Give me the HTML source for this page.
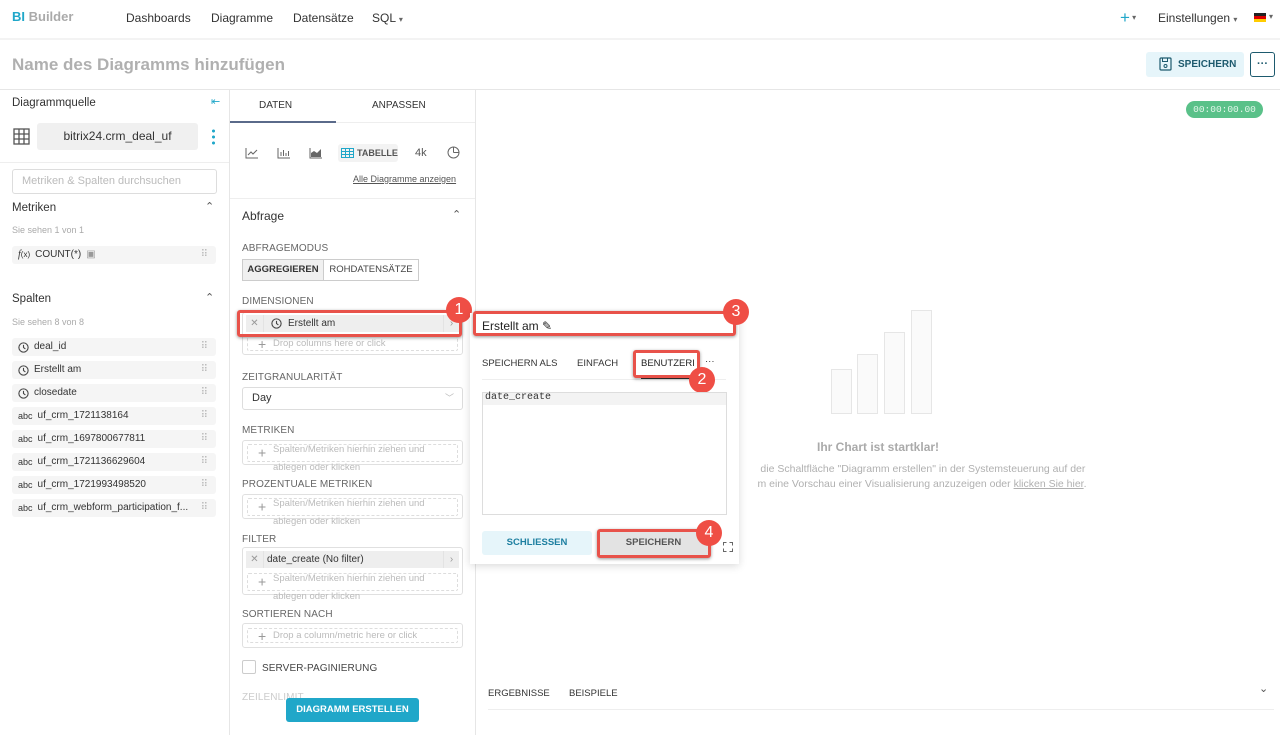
<!DOCTYPE html>
<html><head><meta charset="utf-8"><style>
*{box-sizing:border-box;margin:0;padding:0}
body{width:1280px;height:735px;overflow:hidden;background:#fff;font-family:"Liberation Sans",sans-serif;color:#333;position:relative}
.a{position:absolute}
.lab{font-size:10px;color:#666;letter-spacing:.1px}
.item{position:absolute;left:12px;width:204px;height:18px;background:#f5f5f5;border-radius:3px;font-size:10px;color:#333;line-height:18px;padding-left:6px;display:flex;align-items:center;gap:5px}
.item .dots{position:absolute;right:8px;top:0;color:#bbb;font-size:10px}
.drop{position:absolute;left:242px;width:221px;border:1px solid #e0e0e0;border-radius:3px}
.drop .in{position:absolute;left:4px;right:4px;border:1px dashed #ddd;border-radius:2px;font-size:9.5px;color:#bbb;line-height:14px;padding-left:25px}
.drop .in:before{content:"+";position:absolute;left:10px;top:50%;transform:translateY(-50%);font-size:14px;color:#999}
.red{position:absolute;border:3px solid #e8524a;border-radius:3px;box-shadow:0 1px 3px rgba(0,0,0,.4)}
.num{position:absolute;width:26px;height:26px;border-radius:50%;background:#ef4e45;color:#fff;font-size:16px;text-align:center;line-height:26px}
.chip{position:absolute;left:246px;width:213px;height:17px;background:#eee;font-size:10px;color:#333;display:flex;align-items:center}
.chip .x{width:18px;text-align:center;color:#999;border-right:1px solid #e3e3e3;height:17px;line-height:17px}
.chip .r{position:absolute;right:0;width:16px;text-align:center;color:#999;border-left:1px solid #e3e3e3;height:17px;line-height:17px}
</style></head><body>
<svg width="0" height="0" style="position:absolute"><defs><symbol id="clk" viewBox="0 0 10 10"><circle cx="5" cy="5" r="4.2" fill="none" stroke="#444" stroke-width="1"/><path d="M5 2.6V5l1.7 1.3" fill="none" stroke="#444" stroke-width="1"/></symbol></defs></svg>
<!-- nav -->
<div class="a" style="left:12px;top:9px;font-size:13px;font-weight:bold;color:#aaa"><span style="color:#20a7c9">BI</span> Builder</div>
<div class="a" style="left:126px;top:11px;font-size:12px;color:#333">Dashboards</div>
<div class="a" style="left:211px;top:11px;font-size:12px;color:#333">Diagramme</div>
<div class="a" style="left:293px;top:11px;font-size:12px;color:#333">Datensätze</div>
<div class="a" style="left:372px;top:11px;font-size:12px;color:#333">SQL <span style="font-size:8px;color:#666">▾</span></div>
<div class="a" style="left:1120px;top:8px;font-size:17px;color:#20a7c9">+<span style="font-size:8px;color:#666;vertical-align:3px"> ▾</span></div>
<div class="a" style="left:1158px;top:11px;font-size:12px;color:#333">Einstellungen <span style="font-size:8px;color:#666">▾</span></div>
<div class="a" style="left:1254px;top:13px;width:12px;height:9px;background:linear-gradient(#222 33%,#d00 33%,#d00 66%,#fc0 66%)"></div>
<div class="a" style="left:1269px;top:12px;font-size:8px;color:#666">▾</div>
<div class="a" style="left:0;top:38px;width:1280px;height:2px;background:#f3f3f3"></div>
<!-- title -->
<div class="a" style="left:12px;top:55px;font-size:17px;font-weight:bold;color:#b0b0b0">Name des Diagramms hinzufügen</div>
<div class="a" style="left:1146px;top:52px;width:98px;height:25px;background:#e6f5fa;border-radius:3px;font-size:10px;font-weight:bold;color:#1d5a6e;line-height:25px;padding-left:32px">SPEICHERN</div>
<svg class="a" style="left:1159px;top:57px" width="13" height="14" viewBox="0 0 13 14"><rect x="1" y="1" width="11" height="12" rx="1" fill="none" stroke="#1d5a6e" stroke-width="1.2"/><rect x="3.5" y="1" width="5" height="3.5" fill="none" stroke="#1d5a6e"/><circle cx="6.5" cy="9" r="1.5" fill="none" stroke="#1d5a6e"/></svg>
<div class="a" style="left:1250px;top:52px;width:25px;height:25px;border:1px solid #1d5a6e;border-radius:3px;text-align:center;font-size:11px;font-weight:bold;color:#1d5a6e;line-height:22px">···</div>
<div class="a" style="left:0;top:89px;width:1280px;height:1px;background:#e6e6e6"></div>
<div class="a" style="left:229px;top:89px;width:1px;height:646px;background:#e6e6e6"></div>
<div class="a" style="left:475px;top:89px;width:1px;height:646px;background:#e6e6e6"></div>
<!-- left -->
<div class="a" style="left:12px;top:97px;font-size:11.5px;color:#333">Diagrammquelle</div>
<div class="a" style="left:211px;top:95px;font-size:11px;color:#20a7c9">⇤</div>
<svg class="a" style="left:13px;top:128px" width="17" height="17" viewBox="0 0 17 17"><g fill="none" stroke="#555" stroke-width="1.3"><rect x="1" y="1" width="15" height="15"/><path d="M6 1v15M11 1v15M1 6h15M1 11h15"/></g></svg>
<div class="a" style="left:37px;top:123px;width:161px;height:27px;background:#f0f0f0;border-radius:3px;font-size:12px;color:#333;text-align:center;line-height:27px">bitrix24.crm_deal_uf</div>
<div class="a" style="left:212px;top:128px;width:3px;height:17px;background:radial-gradient(circle,#20a7c9 1.4px,transparent 1.6px) 0 0/3px 6px"></div>
<div class="a" style="left:0;top:162px;width:229px;height:1px;background:#eee"></div>
<div class="a" style="left:12px;top:169px;width:205px;height:25px;border:1px solid #ddd;border-radius:3px;font-size:11px;color:#bbb;line-height:23px;padding-left:9px">Metriken &amp; Spalten durchsuchen</div>
<div class="a" style="left:12px;top:202px;font-size:11.5px;color:#333">Metriken</div>
<div class="a" style="left:205px;top:200px;font-size:11px;color:#555">⌃</div>
<div class="a" style="left:12px;top:225px;font-size:9px;color:#aaa">Sie sehen 1 von 1</div>
<div class="item" style="top:246px"><span><i style="font-family:'Liberation Serif';font-size:10px">f</i><span style="font-size:8px">(x)</span></span> COUNT(*) <span style="color:#999">▣</span><span class="dots">⠿</span></div>
<div class="a" style="left:12px;top:293px;font-size:11.5px;color:#333">Spalten</div>
<div class="a" style="left:205px;top:291px;font-size:11px;color:#555">⌃</div>
<div class="a" style="left:12px;top:317px;font-size:9px;color:#aaa">Sie sehen 8 von 8</div>
<div class="item" style="top:338px"><svg width="11" height="11"><use href="#clk"/></svg> deal_id<span class="dots">⠿</span></div>
<div class="item" style="top:361px"><svg width="11" height="11"><use href="#clk"/></svg> Erstellt am<span class="dots">⠿</span></div>
<div class="item" style="top:384px"><svg width="11" height="11"><use href="#clk"/></svg> closedate<span class="dots">⠿</span></div>
<div class="item" style="top:407px"><span style="font-size:9px">abc</span>uf_crm_1721138164<span class="dots">⠿</span></div>
<div class="item" style="top:430px"><span style="font-size:9px">abc</span>uf_crm_1697800677811<span class="dots">⠿</span></div>
<div class="item" style="top:453px"><span style="font-size:9px">abc</span>uf_crm_1721136629604<span class="dots">⠿</span></div>
<div class="item" style="top:476px"><span style="font-size:9px">abc</span>uf_crm_1721993498520<span class="dots">⠿</span></div>
<div class="item" style="top:499px"><span style="font-size:9px">abc</span>uf_crm_webform_participation_f...<span class="dots">⠿</span></div>
<!-- middle -->
<div class="a" style="left:259px;top:100px;font-size:10px;color:#333">DATEN</div>
<div class="a" style="left:372px;top:100px;font-size:10px;color:#333">ANPASSEN</div>
<div class="a" style="left:230px;top:121px;width:106px;height:2px;background:#5a6a8a"></div>
<div class="a" style="left:336px;top:122px;width:139px;height:1px;background:#eee"></div>
<svg class="a" style="left:245px;top:147px" width="14" height="12"><path d="M1 1v10h12M3 8l3-3 2 2 4-4" fill="none" stroke="#666" stroke-width="1"/></svg>
<svg class="a" style="left:277px;top:147px" width="14" height="12"><path d="M1 1v10h12M4 9V5M6.5 9V3M9 9V6M11.5 9V4" fill="none" stroke="#666" stroke-width="1"/></svg>
<svg class="a" style="left:309px;top:147px" width="14" height="12"><path d="M1 1v10h12" fill="none" stroke="#666"/><path d="M2 10V6l3-2 3 2 4-4v8z" fill="#666"/></svg>
<div class="a" style="left:338px;top:144px;width:60px;height:18px;background:#f3f3f3;border-radius:3px;font-size:9px;font-weight:bold;color:#555;line-height:18px;padding-left:19px">TABELLE</div>
<svg class="a" style="left:341px;top:148px" width="13" height="10"><g fill="none" stroke="#20a7c9"><rect x=".5" y=".5" width="12" height="9"/><path d="M.5 3.5h12M.5 6.5h12M4.5 .5v9M8.5 .5v9"/></g></svg>
<div class="a" style="left:415px;top:147px;font-size:11px;color:#555">4k</div>
<svg class="a" style="left:447px;top:146px" width="13" height="13"><circle cx="6.5" cy="6.5" r="5.5" fill="none" stroke="#666"/><path d="M6.5 6.5V1M6.5 6.5H12" stroke="#666"/></svg>
<div class="a" style="left:353px;top:174px;font-size:9px;color:#555;text-decoration:underline">Alle Diagramme anzeigen</div>
<div class="a" style="left:230px;top:198px;width:245px;height:1px;background:#eee"></div>
<div class="a" style="left:242px;top:209px;font-size:12px;color:#333">Abfrage</div>
<div class="a" style="left:452px;top:208px;font-size:11px;color:#555">⌃</div>
<div class="a lab" style="left:242px;top:243px">ABFRAGEMODUS</div>
<div class="a" style="left:242px;top:259px;width:82px;height:22px;background:#f0f0f0;border:1px solid #ccc;font-size:9.5px;font-weight:bold;color:#333;text-align:center;line-height:20px">AGGREGIEREN</div>
<div class="a" style="left:323px;top:259px;width:96px;height:22px;border:1px solid #ccc;font-size:9.5px;color:#444;text-align:center;line-height:20px">ROHDATENSÄTZE</div>
<div class="a lab" style="left:242px;top:296px">DIMENSIONEN</div>
<div class="drop" style="top:312px;height:43px"><div class="in" style="top:23px;height:15px">Drop columns here or click</div></div>
<div class="chip" style="top:315px"><span class="x">✕</span><svg style="margin:0 6px 0 7px" width="11" height="11"><use href="#clk"/></svg>Erstellt am<span class="r">›</span></div>
<div class="red" style="left:237px;top:310px;width:225px;height:27px"></div>
<div class="num" style="left:446px;top:297px">1</div>
<div class="a lab" style="left:242px;top:372px">ZEITGRANULARITÄT</div>
<div class="a" style="left:242px;top:387px;width:221px;height:23px;border:1px solid #ddd;border-radius:3px;font-size:11px;color:#333;line-height:21px;padding-left:9px">Day<span class="a" style="right:8px;color:#bbb;font-size:9px">﹀</span></div>
<div class="a lab" style="left:242px;top:425px">METRIKEN</div>
<div class="drop" style="top:440px;height:25px"><div class="in" style="top:3px;height:18px;line-height:9px;font-size:9.5px">Spalten/Metriken hierhin ziehen und<br><br>ablegen oder klicken</div></div>
<div class="a lab" style="left:242px;top:479px">PROZENTUALE METRIKEN</div>
<div class="drop" style="top:494px;height:25px"><div class="in" style="top:3px;height:18px;line-height:9px;font-size:9.5px">Spalten/Metriken hierhin ziehen und<br><br>ablegen oder klicken</div></div>
<div class="a lab" style="left:242px;top:534px">FILTER</div>
<div class="drop" style="top:547px;height:48px"><div class="in" style="top:25px;height:18px;line-height:9px;font-size:9.5px">Spalten/Metriken hierhin ziehen und<br><br>ablegen oder klicken</div></div>
<div class="chip" style="top:551px"><span class="x">✕</span><span style="margin-left:3px">date_create (No filter)</span><span class="r">›</span></div>
<div class="a lab" style="left:242px;top:609px">SORTIEREN NACH</div>
<div class="drop" style="top:623px;height:25px"><div class="in" style="top:4px;height:15px">Drop a column/metric here or click</div></div>
<div class="a" style="left:242px;top:660px;width:14px;height:14px;border:1px solid #ccc;border-radius:2px"></div>
<div class="a lab" style="left:262px;top:663px;color:#444">SERVER-PAGINIERUNG</div>
<div class="a lab" style="left:242px;top:692px;color:#ccc">ZEILENLIMIT</div>
<div class="a" style="left:286px;top:698px;width:133px;height:24px;background:#20a7c9;border-radius:3px;font-size:9.5px;font-weight:bold;color:#fff;text-align:center;line-height:24px">DIAGRAMM ERSTELLEN</div>
<!-- right -->
<div class="a" style="left:1186px;top:101px;width:77px;height:17px;background:#5ac189;border-radius:9px;font-family:'Liberation Mono';font-size:9.5px;color:#e5f7ec;text-align:center;line-height:17px">00:00:00.00</div>
<div class="a" style="left:831px;top:369px;width:21px;height:45px;background:#fafafa;border:1px solid #e6e6e6"></div>
<div class="a" style="left:857px;top:354px;width:21px;height:60px;background:#fafafa;border:1px solid #e6e6e6"></div>
<div class="a" style="left:884px;top:332px;width:21px;height:82px;background:#fafafa;border:1px solid #e6e6e6"></div>
<div class="a" style="left:911px;top:310px;width:21px;height:104px;background:#fafafa;border:1px solid #e6e6e6"></div>
<div class="a" style="left:817px;top:440px;font-size:12px;font-weight:bold;color:#aaa">Ihr Chart ist startklar!</div>
<div class="a" style="left:740px;top:462px;width:400px;font-size:10.5px;color:#b0b0b0;line-height:15px">&nbsp;&nbsp;&nbsp;&nbsp;&nbsp;&nbsp;&nbsp;die Schaltfläche "Diagramm erstellen" in der Systemsteuerung auf der<br>&nbsp;&nbsp;&nbsp;&nbsp;&nbsp;&nbsp;m eine Vorschau einer Visualisierung anzuzeigen oder <u>klicken Sie hier</u>.</div>
<div class="a" style="left:488px;top:688px;font-size:9.5px;color:#333">ERGEBNISSE</div>
<div class="a" style="left:569px;top:688px;font-size:9.5px;color:#333">BEISPIELE</div>
<div class="a" style="left:1259px;top:682px;font-size:11px;color:#555">⌄</div>
<div class="a" style="left:488px;top:709px;width:786px;height:1px;background:#eee"></div>
<!-- popover -->
<div class="a" style="left:470px;top:313px;width:269px;height:251px;background:#fff;box-shadow:0 2px 8px rgba(0,0,0,.15)"></div>
<div class="a" style="left:482px;top:319px;font-size:12px;color:#222">Erstellt am ✎</div>
<div class="red" style="left:473px;top:311px;width:263px;height:25px"></div>
<div class="num" style="left:723px;top:299px">3</div>
<div class="a" style="left:482px;top:358px;font-size:9.5px;color:#333">SPEICHERN ALS</div>
<div class="a" style="left:577px;top:358px;font-size:9.5px;color:#333">EINFACH</div>
<div class="a" style="left:641px;top:358px;font-size:9.5px;color:#222">BENUTZERI</div>
<div class="a" style="left:705px;top:356px;font-size:9.5px;color:#333">···</div>
<div class="a" style="left:482px;top:379px;width:244px;height:1px;background:#eee"></div>
<div class="a" style="left:641px;top:377px;width:50px;height:2px;background:#333"></div>
<div class="red" style="left:633px;top:350px;width:67px;height:28px"></div>
<div class="num" style="left:689px;top:367px">2</div>
<div class="a" style="left:482px;top:392px;width:245px;height:123px;border:1px solid #ddd"></div>
<div class="a" style="left:483px;top:393px;width:243px;height:12px;background:#f3f3f3"></div>
<div class="a" style="left:485px;top:392px;font-family:'Liberation Mono';font-size:10px;color:#333">date_create</div>
<div class="a" style="left:482px;top:531px;width:110px;height:24px;background:#e6f5fa;border-radius:3px;font-size:9.5px;font-weight:bold;color:#1d7fa0;text-align:center;line-height:24px">SCHLIESSEN</div>
<div class="a" style="left:599px;top:531px;width:109px;height:24px;background:#e3e3e3;font-size:9.5px;font-weight:bold;color:#555;text-align:center;line-height:24px">SPEICHERN</div>
<div class="red" style="left:597px;top:529px;width:114px;height:29px"></div>
<div class="num" style="left:696px;top:520px">4</div>
<div class="a" style="left:723px;top:542px;width:10px;height:10px;border:1px solid #666;clip-path:polygon(0 0,35% 0,35% 100%,65% 100%,65% 0,100% 0,100% 35%,0 35%,0 65%,100% 65%,100% 100%,0 100%)"></div>
</body></html>
